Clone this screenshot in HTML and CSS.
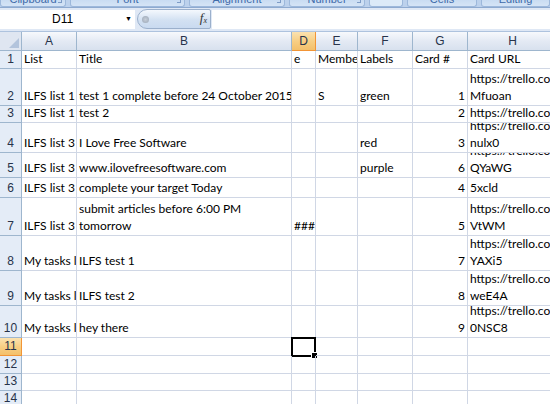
FILE: index.html
```html
<!DOCTYPE html>
<html>
<head>
<meta charset="utf-8">
<link rel="stylesheet" href="styles.css">
</head>
<body>
<div class="app">
  <div class="ribbon">
    <div class="grp g-clip"><span>Clipboard</span><i class="launch"></i></div>
    <div class="grp g-font"><span>Font</span><i class="launch"></i></div>
    <div class="grp g-align"><span>Alignment</span><i class="launch"></i></div>
    <div class="grp g-num"><span>Number</span><i class="launch"></i></div>
    <div class="grp g-blank"></div>
    <div class="grp g-cells"><span>Cells</span></div>
    <div class="grp g-edit"><span>Editing</span></div>
  </div>
  <div class="fbar">
    <div class="namebox"><span class="ref">D11</span><span class="arrow">&#9660;</span></div>
    <div class="fxbtn"><span class="dot"></span><span class="fx">f<sub>x</sub></span></div>
    <div class="finput"></div>
  </div>
  <div class="sheet">
    <div class="corner"><svg width="10" height="10" viewBox="0 0 10 10"><polygon points="10,0 10,10 0,10" fill="#b3c4dc"/></svg></div>
    <div class="ch">A</div><div class="ch">B</div><div class="ch sel">D</div><div class="ch">E</div><div class="ch">F</div><div class="ch">G</div><div class="ch">H</div>

    <div class="rh r1">1</div><div class="c">List</div><div class="c">Title</div><div class="c">e</div><div class="c">Membe</div><div class="c">Labels</div><div class="c">Card #</div><div class="c">Card URL</div>

    <div class="rh r2">2</div><div class="c">ILFS list 1</div><div class="c">test 1 complete before 24 October 2015</div><div class="c"></div><div class="c">S</div><div class="c">green</div><div class="c n">1</div><div class="c"><span>https://trello.com/c/</span><span>Mfuoan</span></div>

    <div class="rh r3">3</div><div class="c">ILFS list 1</div><div class="c">test 2</div><div class="c"></div><div class="c"></div><div class="c"></div><div class="c n">2</div><div class="c">https://trello.com/c/</div>

    <div class="rh r4">4</div><div class="c">ILFS list 3</div><div class="c">I Love Free Software</div><div class="c"></div><div class="c"></div><div class="c">red</div><div class="c n">3</div><div class="c"><span>https://trello.com/c/</span><span>nulx0</span></div>

    <div class="rh r5">5</div><div class="c">ILFS list 3</div><div class="c">www.ilovefreesoftware.com</div><div class="c"></div><div class="c"></div><div class="c">purple</div><div class="c n">6</div><div class="c"><span>https://trello.com/c/</span><span>QYaWG</span></div>

    <div class="rh r6">6</div><div class="c">ILFS list 3</div><div class="c">complete your target Today</div><div class="c"></div><div class="c"></div><div class="c"></div><div class="c n">4</div><div class="c"><span>https://trello.com/c/</span><span>5xcld</span></div>

    <div class="rh r7">7</div><div class="c">ILFS list 3</div><div class="c"><span>submit articles before 6:00 PM</span><span>tomorrow</span></div><div class="c">###</div><div class="c"></div><div class="c"></div><div class="c n">5</div><div class="c"><span>https://trello.com/c/</span><span>VtWM</span></div>

    <div class="rh r8">8</div><div class="c">My tasks list</div><div class="c">ILFS test 1</div><div class="c"></div><div class="c"></div><div class="c"></div><div class="c n">7</div><div class="c"><span>https://trello.com/c/</span><span>YAXi5</span></div>

    <div class="rh r9">9</div><div class="c">My tasks list</div><div class="c">ILFS test 2</div><div class="c"></div><div class="c"></div><div class="c"></div><div class="c n">8</div><div class="c"><span>https://trello.com/c/</span><span>weE4A</span></div>

    <div class="rh r10">10</div><div class="c">My tasks list</div><div class="c">hey there</div><div class="c"></div><div class="c"></div><div class="c"></div><div class="c n">9</div><div class="c"><span>https://trello.com/c/</span><span>0NSC8</span></div>

    <div class="rh r11 sel">11</div><div class="c"></div><div class="c"></div><div class="c active"><i class="handle"></i></div><div class="c"></div><div class="c"></div><div class="c"></div><div class="c"></div>

    <div class="rh">12</div><div class="c"></div><div class="c"></div><div class="c"></div><div class="c"></div><div class="c"></div><div class="c"></div><div class="c"></div>

    <div class="rh">13</div><div class="c"></div><div class="c"></div><div class="c"></div><div class="c"></div><div class="c"></div><div class="c"></div><div class="c"></div>

    <div class="rh">14</div><div class="c"></div><div class="c"></div><div class="c"></div><div class="c"></div><div class="c"></div><div class="c"></div><div class="c"></div>
  </div>
</div>
</body>
</html>
```
FILE: styles.css
```css
* { box-sizing: border-box; }
html, body { margin: 0; padding: 0; }
body { width: 550px; height: 404px; overflow: hidden; background: #fff; font-family: Lato, "Liberation Sans", sans-serif; }
.app { width: 550px; height: 404px; overflow: hidden; display: flex; flex-direction: column; }

.ribbon { height: 8px; flex: none; display: flex; gap: 4px; background: #bcd1ec; border-bottom: 1px solid #8eaad0; overflow: hidden; padding-left: 0; }
.grp { height: 7px; flex: none; background: linear-gradient(#c9dcf2, #d5e4f6); border: 1px solid #9db8db; border-top: none; border-radius: 0 0 3px 3px; position: relative; overflow: hidden; display: flex; justify-content: center; }
.grp span { font-family: "Liberation Sans", sans-serif; font-size: 11px; line-height: 11px; color: #3e6aa9; margin-top: -6px; }
.grp .launch { position: absolute; right: 3px; top: -1px; width: 4px; height: 4px; border: 1px solid #7d9bc6; border-top: none; border-left: none; }
.g-clip { width: 66px; }
.g-font { width: 115px; }
.g-align { width: 96px; }
.g-num { width: 76px; }
.g-blank { width: 34px; background: #dceaf8; }
.g-cells { width: 70px; }
.g-edit { flex: 1; }

.fbar { height: 24px; flex: none; display: flex; align-items: center; background: #dfe8f5; padding: 1px 0 2px; border-bottom: 1px solid #aec3de; }
.namebox { width: 135px; height: 19px; background: #fff; display: flex; align-items: center; position: relative; font-family: "Liberation Sans", sans-serif; font-size: 12px; color: #000; }
.namebox .ref { margin-left: 52px; }
.namebox .arrow { position: absolute; right: 3px; top: 5px; font-size: 7px; line-height: 8px; }
.fxbtn { width: 74px; height: 20px; margin-left: 2px; border: 1px solid #9bb0cc; border-radius: 10px 2px 2px 10px; background: linear-gradient(#f4f8fd, #d3e1f2 55%, #c9daf0); display: flex; align-items: center; justify-content: space-between; padding: 0 3px 0 4px; }
.fxbtn .dot { width: 7px; height: 7px; border-radius: 50%; background: radial-gradient(#c6ced9, #9aa6b5); }
.fx { font-family: "Liberation Serif", serif; font-style: italic; font-size: 13px; color: #333; line-height: 13px; }
.fx sub { font-size: 8px; vertical-align: -1px; }
.finput { flex: 1; height: 19px; background: #fff; margin-left: 1px; }

.sheet { flex: none; display: grid; grid-template-columns: 22px 55px 215px 24px 42px 55px 55px 90px; grid-template-rows: 19px 18px 37px 17px 30px 25px 20px 38px 35px 35px 32px 18px 18px 17px 17px; font-size: 12px; color: #000; }
.corner { background: #dfe6f1; border-right: 1px solid #9eb6ce; border-bottom: 1px solid #9eb6ce; display: flex; align-items: flex-end; justify-content: flex-end; padding: 0 2px 2px 0; }
.ch { background: linear-gradient(#f7f9fc, #e4eaf4 50%, #d8e1ee); border-right: 1px solid #9eb6ce; border-bottom: 1px solid #9eb6ce; text-align: center; font-family: "Liberation Sans", sans-serif; font-size: 12px; line-height: 18px; color: #27334a; }
.ch.sel { background: linear-gradient(#fbe2b0, #f7cf85 50%, #f3c06b); border-color: #f29536; }
.rh { background: #e4ecf7; border-right: 1px solid #9eb6ce; border-bottom: 1px solid #9eb6ce; text-align: center; font-family: "Liberation Sans", sans-serif; font-size: 12px; color: #27334a; display: flex; align-items: flex-end; justify-content: center; padding-bottom: 1px; line-height: 16px; }
.rh.sel { background: linear-gradient(#fbe2b0, #f7cf85 50%, #f3c06b); border-color: #f29536; }
.c { border-right: 1px solid #d0d7e5; border-bottom: 1px solid #d0d7e5; overflow: hidden; white-space: nowrap; display: flex; flex-direction: column; justify-content: flex-end; padding: 0 2px 1px; line-height: 17px; position: relative; }
.c.n { align-items: flex-end; }
.c span { display: block; }
.c.active { border: 2px solid #000; margin: -1px 0 -1px -1px; overflow: visible; }
.handle { position: absolute; right: -4px; bottom: -4px; width: 5px; height: 5px; background: #000; border: 1px solid #fff; box-sizing: content-box; }
```
